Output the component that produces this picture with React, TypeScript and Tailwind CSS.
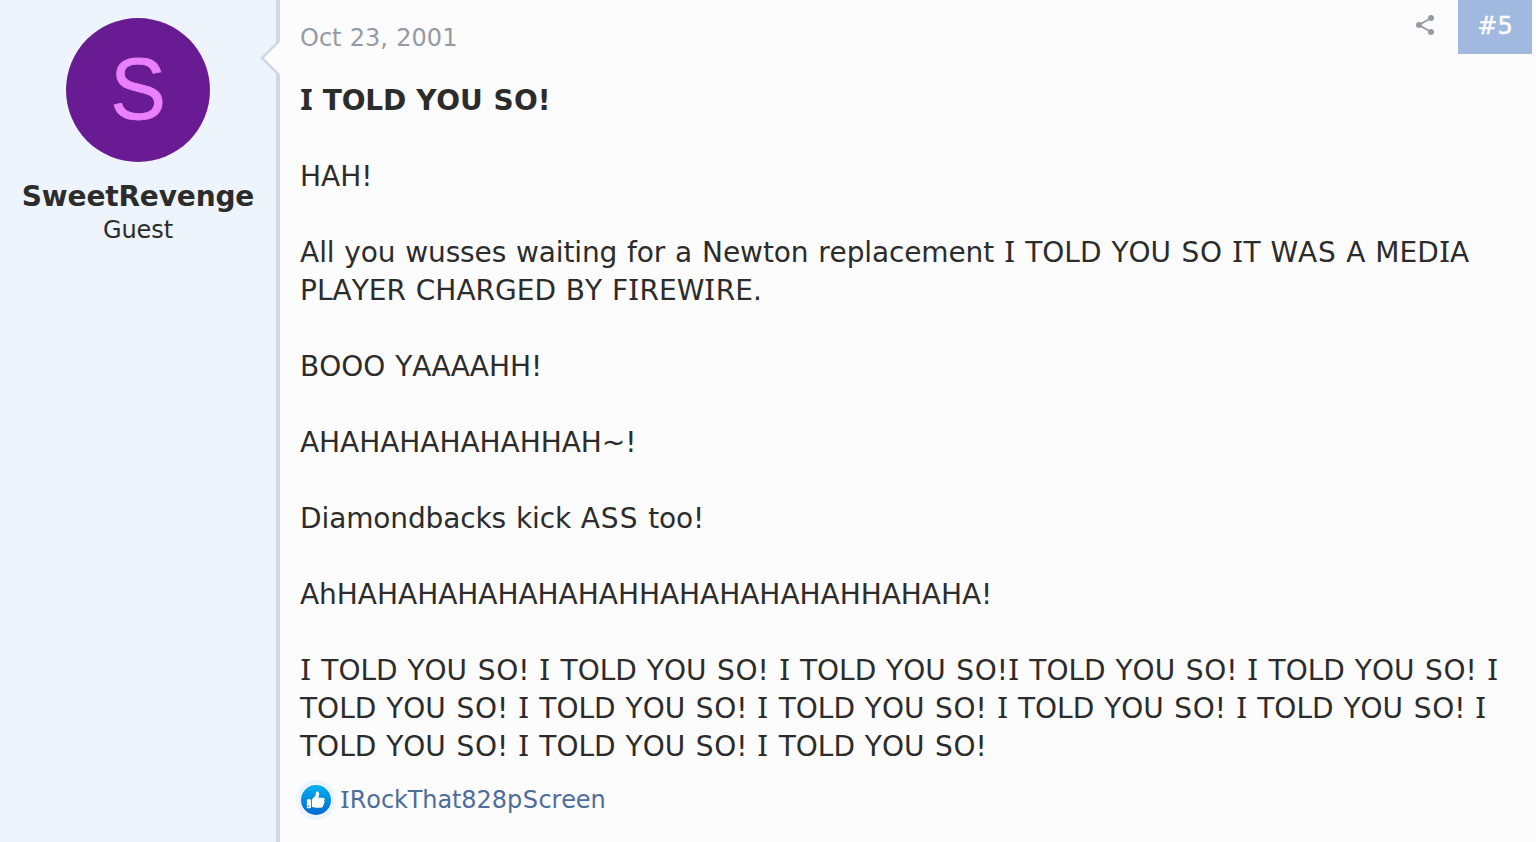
import type { ReactNode } from "react";

type Line = { text: string; className?: string };

const paragraphs: Line[][] = [
  [{ text: "I TOLD YOU SO!", className: "font-bold tracking-[-0.2px] [word-spacing:0.7px]" }],
  [{ text: "HAH!" }],
  [
    { text: "All you wusses waiting for a Newton replacement I TOLD YOU SO IT WAS A MEDIA" },
    { text: "PLAYER CHARGED BY FIREWIRE." },
  ],
  [{ text: "BOOO YAAAAHH!" }],
  [{ text: "AHAHAHAHAHAHHAH~!", className: "tracking-[-0.05px]" }],
  [{ text: "Diamondbacks kick ASS too!" }],
  [{ text: "AhHAHAHAHAHAHAHAHHAHAHAHAHAHHAHAHA!", className: "tracking-[-0.03px]" }],
  [
    { text: "I TOLD YOU SO! I TOLD YOU SO! I TOLD YOU SO!I TOLD YOU SO! I TOLD YOU SO! I" },
    { text: "TOLD YOU SO! I TOLD YOU SO! I TOLD YOU SO! I TOLD YOU SO! I TOLD YOU SO! I" },
    { text: "TOLD YOU SO! I TOLD YOU SO! I TOLD YOU SO!" },
  ],
];

// Brings DejaVu Sans closer to Verdana: a capital I with serifs (Noto Sans),
// a roomier S and slightly tighter lowercase runs.
function VerdanaText({ children }: { children: string }): ReactNode {
  return children.split(/(I|S|[a-z]{2,})/).map((part, i) => {
    if (part === "I") {
      return (
        <span
          key={i}
          className="inline-block scale-x-112 px-[0.03em] font-['Noto_Sans',sans-serif] text-[1.02em] leading-none"
        >
          I
        </span>
      );
    }
    if (part === "S") return <span key={i} className="px-[0.024em]">S</span>;
    if (/^[a-z]{2,}$/.test(part)) return <span key={i} className="tracking-[-0.14px]">{part}</span>;
    return part;
  });
}

function ShareIcon() {
  return (
    <svg viewBox="0 0 18 20" className="h-5 w-[18px] text-[#949ba5]" fill="currentColor">
      <path d="M3 10 15 3M3 10l12 7" stroke="currentColor" strokeWidth="1.8" />
      <circle cx="3" cy="10" r="3" />
      <circle cx="15" cy="3" r="3" />
      <circle cx="15" cy="17" r="3" />
    </svg>
  );
}

function LikeIcon() {
  return (
    <svg viewBox="0 0 40 40" className="-ml-1 size-10 shrink-0">
      <defs>
        <linearGradient id="like" x1="0" y1="0" x2="0" y2="1">
          <stop offset="0" stopColor="#00b2f0" />
          <stop offset="1" stopColor="#0566d4" />
        </linearGradient>
      </defs>
      <circle cx="20" cy="20" r="20" fill="#edf4fb" />
      <circle cx="20" cy="20" r="15" fill="url(#like)" />
      <path
        fill="#fff"
        d="M11.7 19.3h2.4c.5 0 .8.3.8.8v7.3c0 .5-.3.8-.8.8h-2.4c-.5 0-.8-.3-.8-.8v-7.3c0-.5.3-.8.8-.8ZM15.9 20c0-1.3 3.5-3.2 3.8-5.2.2-1.5-.1-3.2 1.3-3.2 1.9 0 2.4 1.8 2.1 3.5-.2 1.2-.7 2.1-.8 2.7h4.4c2.1 0 2.5 1.9 1.3 2.8.9.7.8 2-.2 2.5.5.9.2 1.9-.8 2.3.4 1.2-.4 2.1-1.8 2.2-3.6.4-7.1.2-9.3-.9V20Z"
      />
      <circle cx="12.6" cy="26.3" r=".8" fill="#0879dc" />
    </svg>
  );
}

export default function App() {
  return (
    <article className="flex h-[842px] w-[1536px] overflow-hidden bg-[#fcfcfc] font-['DejaVu_Sans',Verdana,sans-serif] text-[28px] leading-[38px] text-[#2c2c2c] [font-kerning:none]">
      <aside className="relative flex w-[280px] shrink-0 flex-col items-center border-r-4 border-[#cfd8e8] bg-[#edf4fb] pt-[18px]">
        <div className="flex size-36 items-center justify-center rounded-full bg-[#691b93] pb-1 font-['Liberation_Sans',Arial,sans-serif] text-[87px] leading-none text-[#ea80fc] [-webkit-text-stroke:0.8px_#ea80fc]">
          <span className="scale-x-96">S</span>
        </div>
        <h4 className="mt-4 font-bold tracking-[-0.15px] whitespace-nowrap">SweetRevenge</h4>
        <h5 className="-mt-0.5 text-[24px] leading-8 tracking-[-0.1px]">Guest</h5>
        <svg viewBox="0 0 20 34" className="absolute top-[41px] -right-1 h-[34px] w-5">
          <path d="M20 0 3 17l17 17Z" fill="#fcfcfc" />
          <path d="M19 0 2 17l17 17" fill="none" stroke="#cfd8e8" strokeWidth="2.5" />
        </svg>
      </aside>

      <div className="flex min-w-0 flex-1 flex-col pl-5">
        <header className="flex h-[54px] items-start pr-1">
          <time className="mt-[19px] text-[24px] text-[#949ba5] [word-spacing:0.7px]">Oct 23, 2001</time>
          <div className="mt-[15px] mr-6 ml-auto">
            <ShareIcon />
          </div>
          <a className="flex h-[54px] w-[74px] items-center justify-center bg-[#a1b9de] pb-0.5 text-[24px] text-white [-webkit-text-stroke:0.4px_white]">
            #5
          </a>
        </header>

        <div className="mt-7 flex flex-col gap-[38px] whitespace-nowrap [word-spacing:1px]">
          {paragraphs.map((lines, i) => (
            <p key={i}>
              {lines.map((line) => (
                <span key={line.text} className="block">
                  <span className={line.className}>
                    <VerdanaText>{line.text}</VerdanaText>
                  </span>
                </span>
              ))}
            </p>
          ))}
        </div>

        <footer className="mt-3.5 flex items-center gap-1 text-[24px] text-[#4d6d9a]">
          <LikeIcon />
          <span className="tracking-[-0.05px]">
            <VerdanaText>IRockThat828pScreen</VerdanaText>
          </span>
        </footer>
      </div>
    </article>
  );
}
